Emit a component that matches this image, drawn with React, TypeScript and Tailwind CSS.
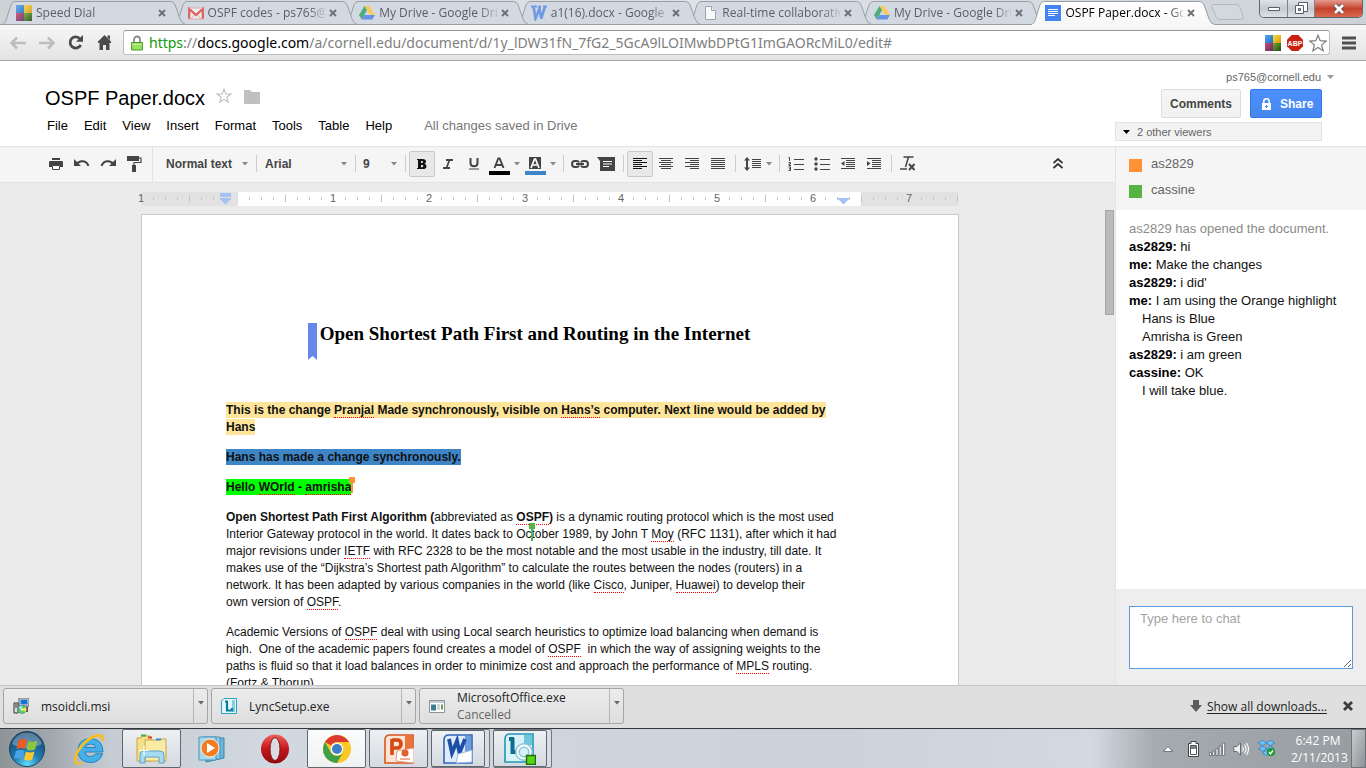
import React from "react";

const ui = "font-['Open_Sans',sans-serif]";

/* ---------- small drawings ---------- */

const DriveIcon = () => (
  <svg width="16" height="16" viewBox="0 0 16 16">
    <path d="M5.5 1h5L16 10h-5z" fill="#fbcb43" />
    <path d="M5.5 1 0 10l2.7 4.6L8 5.3z" fill="#3ba56a" />
    <path d="M5.2 10H16l-2.7 4.6H2.7z" fill="#5387ea" />
  </svg>
);
const DialIcon = () => (
  <svg width="16" height="16" viewBox="0 0 16 16">
    <defs>
      <linearGradient id="dialA" x2="1" y2="1"><stop stopColor="#5aa7ee" /><stop offset="1" stopColor="#1f6fc4" /></linearGradient>
      <linearGradient id="dialB" x2="1" y2="1"><stop stopColor="#ffd83c" /><stop offset="1" stopColor="#d79b10" /></linearGradient>
      <linearGradient id="dialC" x2="1" y2="1"><stop stopColor="#d2496b" /><stop offset="1" stopColor="#5c2c6c" /></linearGradient>
      <linearGradient id="dialD" x2="1" y2="1"><stop stopColor="#6fa92e" /><stop offset="1" stopColor="#234a12" /></linearGradient>
    </defs>
    <path d="M0 0h8v8H0z" fill="url(#dialA)" />
    <path d="M8 0h8v8H8z" fill="url(#dialB)" />
    <path d="M0 8h8v8H0z" fill="url(#dialC)" />
    <path d="M8 8h8v8H8z" fill="url(#dialD)" />
  </svg>
);
const MailIcon = () => (
  <svg width="16" height="16" viewBox="0 0 16 16">
    <path d="M0 3h16v11H0z" fill="#f4f0f0" />
    <path d="M3 14l4-5M13 14 9 9" stroke="#d9a9a7" fill="none" />
    <path d="M1.200 14V4L8 10l6.800-6v10" stroke="#dc4b45" strokeWidth="2.200" fill="none" />
    <path d="M1 3h14M0 14h16" stroke="#e8a19e" strokeWidth="1" />
  </svg>
);
const WIcon = () => (
  <svg width="16" height="16" viewBox="0 0 16 16" fill="none" stroke="#5f8fe6" strokeWidth="2.600">
    <path d="M2.500 1.500l2 12L8.500 3.500l1.700 10L14 1.500" />
    <path d="M0 1.500h6M7 2h3M12 1.500h4" strokeWidth="2" />
  </svg>
);
const PageIcon = () => (
  <svg width="16" height="16" viewBox="0 0 16 16">
    <path d="M3.500 1.500h6l4 4v9h-10z" fill="#fff" stroke="#9a9a9a" />
    <path d="M9.500 1.500v4h4" fill="#eee" stroke="#9a9a9a" />
  </svg>
);
const DocsIcon = () => (
  <svg width="16" height="16" viewBox="0 0 16 16">
    <path d="M0 0h16v16H0z" fill="#4384f4" />
    <path d="M3 4.500h10M3 6.500h10M3 8.500h10M3 10.500h7" stroke="#fff" strokeWidth="1" />
  </svg>
);
const CloseX = () => (
  <svg width="8" height="8" viewBox="0 0 8 8">
    <path d="M1 1l6 6M7 1 1 7" stroke="#6b6e72" strokeWidth="1.800" />
  </svg>
);
const Caret = ({ color = "#888" }: { color?: string }) => (
  <svg width="6" height="4" viewBox="0 0 6 4"><path d="M0 0h6L3 3.500z" fill={color} /></svg>
);

/* ---------- browser chrome ---------- */

const tabs = [
  { t: "Speed Dial", icon: <DialIcon /> },
  { t: "OSPF codes - ps765@", icon: <MailIcon /> },
  { t: "My Drive - Google Dri", icon: <DriveIcon /> },
  { t: "a1(16).docx - Google D", icon: <WIcon /> },
  { t: "Real-time collaborativ", icon: <PageIcon /> },
  { t: "My Drive - Google Dri", icon: <DriveIcon /> },
  { t: "OSPF Paper.docx - Go", icon: <DocsIcon />, active: true },
];

function TabStrip() {
  return (
    <div className={`flex h-[25px] shrink-0 items-stretch border-b border-[#9b9fa4] bg-linear-to-r from-[#cdd2d6] via-[#dfe3e7] to-[#ccd2d8] pl-0.5 ${ui}`}>
      <div role="tablist" className="-mb-px flex max-w-[1201px] min-w-0 flex-1">
        {tabs.map((tab, i) => (
          <div
            key={i}
            role="tab"
            aria-selected={!!tab.active}
            style={{ zIndex: tab.active ? 20 : 10 - i }}
            className="relative flex min-w-0 flex-1 items-center pr-2 pl-3.5"
          >
            <svg className="absolute top-0 left-0 h-full w-[calc(100%+12px)]" viewBox="0 0 184 25" preserveAspectRatio="none">
              <defs>
                <linearGradient id="tabOn" x2="0" y2="1"><stop stopColor="#fff" /><stop offset="1" stopColor="#f7f7f7" /></linearGradient>
              </defs>
              <path
                d="M0 24.500C3 24 3.500 22 4.500 19L9 5Q10.500 1.500 13 1.500H169Q172 1.500 173.500 5L178.500 19Q180.500 24 184 24.500"
                fill={tab.active ? "url(#tabOn)" : "#d3d9e2"}
                stroke="#9a9fa5"
              />
              <path d={tab.active ? "M1 24.500H183" : "M0 24.500H184"} stroke={tab.active ? "#f7f7f7" : "#9a9fa5"} />
            </svg>
            <span className={`relative shrink-0 ${tab.active ? "" : "opacity-85"}`}>{tab.icon}</span>
            <span className={`relative mr-1 ml-1 min-w-0 flex-1 text-[12px] leading-4 whitespace-nowrap [mask-image:linear-gradient(to_right,black_85%,rgba(0,0,0,0.2))] ${tab.active ? "text-black" : "text-[#5b5f66]"}`}>
              {tab.t}
            </span>
            <button aria-label="Close tab" className="relative flex size-2 items-center justify-center"><CloseX /></button>
          </div>
        ))}
      </div>
      <button aria-label="New tab" className="ml-2 h-4 w-[34px] self-center">
        <svg width="34" height="16" viewBox="0 0 34 16"><path d="M3 .5h22q3 0 4 3l3 9q.5 3-2 3H9q-3 0-4-3l-4-9q-1-3 2-3z" fill="#d2d8de" stroke="#b4b9be" /></svg>
      </button>
      <div className="mr-[3px] ml-auto flex h-[18px] overflow-hidden rounded-b-[5px] border border-t-0 border-[#5d6670] text-white">
        <button aria-label="Minimize" className="flex w-7 items-center justify-center border-r border-[#7b8590] bg-linear-to-b from-[#dfe3e7] via-[#c4cad0] to-[#dce1e6]">
          <svg width="12" height="6" viewBox="0 0 12 6"><path d="M.5 1.500h11v3H.5z" fill="#fff" stroke="#555e69" /></svg>
        </button>
        <button aria-label="Restore" className="flex w-[27px] items-center justify-center border-r border-[#7b8590] bg-linear-to-b from-[#dfe3e7] via-[#c4cad0] to-[#dce1e6]">
          <svg width="13" height="13" viewBox="0 0 13 13"><path d="M3.500 .5h9v9h-9z" fill="#fff" stroke="#555e69" /><path d="M.5 3.500h8v8h-8z" fill="#fff" stroke="#555e69" /><path d="M3.500 6.500h2v2h-2z" fill="#bbb" stroke="#555e69" /></svg>
        </button>
        <button aria-label="Close window" className="flex w-[47px] items-center justify-center bg-linear-to-b from-[#e39a8d] via-[#c5412c] to-[#d8694c]">
          <svg width="14" height="12" viewBox="0 0 14 12"><path d="M3 2l8 8M11 2l-8 8" stroke="#5c4040" strokeWidth="4.500" /><path d="M3 2l8 8M11 2l-8 8" stroke="#fff" strokeWidth="2.800" /></svg>
        </button>
      </div>
    </div>
  );
}

function AddressBar() {
  return (
    <div className="flex h-9 shrink-0 items-center border-b border-[#a3a3a3] bg-linear-to-b from-[#f7f7f7] to-[#e3e3e3] pr-2.5 pl-2">
      <button aria-label="Back" className="flex w-[29px] items-center pl-px">
        <svg width="18" height="14" viewBox="0 0 18 14" fill="none" stroke="#bdbdbd" strokeWidth="2.600"><path d="M8 1.500 2.500 7 8 12.500M3 7h14" /></svg>
      </button>
      <button aria-label="Forward" className="flex w-[29px] items-center pl-px">
        <svg width="18" height="14" viewBox="0 0 18 14" fill="none" stroke="#bdbdbd" strokeWidth="2.600"><path d="M10 1.500 15.500 7 10 12.500M15 7H1" /></svg>
      </button>
      <button aria-label="Reload" className="flex w-[29px] items-center pl-px">
        <svg width="17" height="17" viewBox="0 0 17 17"><path d="M13 4.800A5.600 5.600 0 1 0 13.700 11" fill="none" stroke="#4b4b4b" strokeWidth="2.800" /><path d="M16 1v6.800H9z" fill="#4b4b4b" /></svg>
      </button>
      <button aria-label="Home" className="flex w-7 items-center pl-px">
        <svg width="17" height="17" viewBox="0 0 17 17"><path d="M8.500 1 15.500 8l-1.300 1.300-.7-.6V16h-3.500v-5H7v5H3.500V8.700l-.7.6L1.500 8z" fill="#4b4b4b" /><path d="M11.500 1.500H14V6l-2.500-2.500z" fill="#4b4b4b" /></svg>
      </button>
      <div className="flex h-[25px] min-w-0 flex-1 items-center rounded-[3px] border border-[#bdbdbd] border-t-[#959595] bg-white pr-0.5 pl-[7px]">
        <svg width="12" height="16" viewBox="0 0 12 16" className="shrink-0"><path d="M3 8V4.500a3 3 0 0 1 6 0V8" fill="none" stroke="#8b8b8b" strokeWidth="1.800" /><path d="M.6 7.500h10.800v7.500H.6z" fill="#9be05f" stroke="#4d9a2c" /><path d="M1.500 9.500h9" stroke="#c3f09a" /></svg>
        <div className="ml-1.5 min-w-0 flex-1 truncate font-['Noto_Sans',sans-serif] text-[14px] leading-[22px] text-[#808080]">
          <span className="text-[#0b9a0b]">https</span>://<span className="text-black">docs.google.com</span>/a/cornell.edu/document/d/1y_lDW31fN_7fG2_5GcA9lLOIMwbDPtG1ImGAORcMiL0/edit#
        </div>
        <button aria-label="Speed dial" className="mr-1.5"><DialIcon /></button>
        <button aria-label="Adblock" className="mr-1.5">
          <svg width="16" height="16" viewBox="0 0 16 16"><path d="M4.700 0h6.600L16 4.700v6.600L11.300 16H4.700L0 11.300V4.700z" fill="#c9200f" /><text x="8" y="10.800" fontSize="7" fontWeight="bold" fontFamily="Liberation Sans" fill="#fff" textAnchor="middle">ABP</text></svg>
        </button>
        <button aria-label="Bookmark">
          <svg width="18" height="18" viewBox="0 0 18 18"><path d="M9 1.200l2.200 5.500 6 .4-4.600 3.800 1.500 5.800L9 13.500l-5.100 3.200 1.500-5.800L.8 7.100l6-.4z" fill="#fff" stroke="#7c7c7c" strokeWidth="1.200" /></svg>
        </button>
      </div>
      <button aria-label="Menu" className="ml-3">
        <svg width="14" height="14" viewBox="0 0 14 14"><path d="M0 2h14M0 7h14M0 12h14" stroke="#505050" strokeWidth="2.800" strokeLinecap="butt" /></svg>
      </button>
    </div>
  );
}

/* ---------- document header ---------- */

const menus = ["File", "Edit", "View", "Insert", "Format", "Tools", "Table", "Help"];

function Header() {
  return (
    <header className="flex h-[85px] shrink-0 justify-between bg-white">
      <div className="pt-[25px] pl-[45px]">
        <div className="flex h-6 items-center">
          <h1 className="text-[20px] leading-6 whitespace-nowrap text-black">OSPF Paper.docx</h1>
          <button aria-label="Star" className="mb-1 ml-[11px]">
            <svg width="16" height="16" viewBox="0 0 15 15"><path d="M7.500 1l1.700 4.500 4.800.2-3.800 3 1.300 4.600-4-2.600-4 2.600 1.300-4.600L1 5.700l4.800-.2z" fill="none" stroke="#c3c3c3" strokeWidth="1.100" /></svg>
          </button>
          <button aria-label="Move to folder" className="mb-0.5 ml-3">
            <svg width="16" height="14" viewBox="0 0 16 14"><path d="M0 0h6l2 2h8v12H0z" fill="#c0c0c0" /></svg>
          </button>
        </div>
        <nav className="mt-2 flex items-center pl-0.5 text-[13px] leading-4 text-black">
          {menus.map((m) => (
            <button key={m} className="mr-4">{m}</button>
          ))}
          <span className="ml-4 text-[#777]">All changes saved in Drive</span>
        </nav>
      </div>
      <div className="flex flex-col items-end pt-2 pr-11">
        <button className="-mr-3 flex items-center gap-1.5 text-[11px] leading-4 text-[#666]">
          ps765@cornell.edu <svg width="7" height="4" viewBox="0 0 7 4"><path d="M0 0h7L3.500 4z" fill="#999" /></svg>
        </button>
        <div className="mt-1 flex gap-[9px] text-[12px] leading-4 font-bold">
          <button className="h-[29px] w-20 rounded-xs border border-[#dcdcdc] bg-linear-to-b from-[#f6f6f6] to-[#f1f1f1] text-[#444]">Comments</button>
          <button className="flex h-[29px] w-[72px] items-center rounded-xs border border-[#3079ed] bg-linear-to-b from-[#4d90fe] to-[#4787ed] pl-2.5 text-white">
            <svg width="11" height="12" viewBox="0 0 11 12"><path d="M2.800 5V3.500a2.700 2.700 0 0 1 5.400 0V5" fill="none" stroke="#fff" strokeWidth="1.500" /><path d="M1 5h9v7H1z" fill="#fff" /><path d="M5.500 7v3M4 8.500h3" stroke="#4d90fe" strokeWidth="1.200" /></svg>
            <span className="ml-2">Share</span>
          </button>
        </div>
        <button className="mt-1 flex h-[19px] w-[207px] items-center gap-[7px] border border-[#e2e2e2] bg-[#f3f3f3] pl-[7px] text-[11px] leading-4 text-[#666]">
          <svg width="7" height="4" viewBox="0 0 7 4"><path d="M0 0h7L3.500 4z" fill="#000" /></svg>
          2 other viewers
        </button>
      </div>
    </header>
  );
}

/* ---------- toolbar ---------- */

const Tool = ({ label, on, wide, children }: { label: string; on?: boolean; wide?: boolean; children: React.ReactNode }) => (
  <button
    aria-label={label}
    aria-pressed={on}
    className={`flex h-[26px] shrink-0 items-center rounded-xs ${wide ? "w-9 justify-between pr-[3px] pl-0.5" : "w-[26px] justify-center"} ${on ? "border border-[#c9c9c9] bg-[#e8e8e8]" : ""}`}
  >
    {children}
    {wide && <Caret />}
  </button>
);
const Sep = () => <span className="mr-[3px] ml-1 h-[17px] w-px shrink-0 bg-[#ccc]" />;

const Lines = ({ d, color = "#444" }: { d: string; color?: string }) => (
  <svg width="16" height="14" viewBox="0 0 16 14"><path d={d} stroke={color} fill="none" /></svg>
);

const Picker = ({ label, value, className }: { label: string; value: string; className: string }) => (
  <div className={`relative flex h-full shrink-0 items-center ${className}`}>
    <select aria-label={label} defaultValue={value} className="w-full appearance-none bg-transparent text-[12px] leading-4 font-bold text-[#444] outline-none">
      <option>{value}</option>
    </select>
    <span className="pointer-events-none absolute inset-y-0 right-2 flex items-center"><Caret /></span>
  </div>
);

function Toolbar() {
  return (
    <div className="flex h-[37px] shrink-0 border-y border-[#e3e3e3] bg-[#f5f5f5]">
      <div className="mb-0.5 flex flex-1 items-center pl-[43px]">
        <Tool label="Print"><svg width="14" height="12" viewBox="0 0 14 12"><path d="M3 0h8v2H3zM1 3h12q1 0 1 1v5h-3V7H3v2H0V4q0-1 1-1z" fill="#444" /><path d="M3.500 7.500h7v4h-7z" fill="#fff" stroke="#444" /></svg></Tool>
        <Tool label="Undo"><svg width="16" height="9" viewBox="0 0 16 9"><path d="M0 0v7h7L4.600 4.700C8 2.300 12 3 13.500 7.200L15.500 6.500C13.500 .8 7.500-.3 3 3z" fill="#444" /></svg></Tool>
        <Tool label="Redo"><svg width="16" height="9" viewBox="0 0 16 9"><path d="M16 0v7H9l2.400-2.300C8 2.300 4 3 2.500 7.200L.5 6.500C2.500 .8 8.500-.3 13 3z" fill="#444" /></svg></Tool>
        <Tool label="Paint format"><svg width="15" height="16" viewBox="0 0 15 16"><path d="M0 0h12v5H0zM5 9h4v7H5z" fill="#444" /><path d="M12 2h2v4.500H7V10" fill="none" stroke="#444" strokeWidth="1.200" /></svg></Tool>
        <span className="-mb-0.5 ml-[5px] w-px self-stretch bg-[#e3e3e3]" />
        <Picker label="Style" value="Normal text" className="w-[103px] pl-[13px]" />
        <span className="h-[17px] w-px bg-[#ccc]" />
        <Picker label="Font" value="Arial" className="w-[98px] pl-2" />
        <span className="h-[17px] w-px bg-[#ccc]" />
        <Picker label="Font size" value="9" className="w-[49px] pl-[7px]" />
        <span className="mr-[3px] h-[17px] w-px bg-[#ccc]" />
        <Tool label="Bold" on><svg width="10" height="10" viewBox="0 0 10 10"><path d="M0 0h5.500Q9 0 9 2.600 9 4.200 7.600 4.700 9.500 5.200 9.500 7.200 9.500 10 6 10H0V9h1V1H0zM4 2v2h1q1 0 1-1T5 2zM4 6v2.200h1.200q1.100 0 1.100-1.100T5.200 6z" fill="#111" fillRule="evenodd" /></svg></Tool>
        <Tool label="Italic"><svg width="10" height="10" viewBox="0 0 10 10"><path d="M3 1h7M0 9h7M6.500 1 3.500 9" stroke="#444" strokeWidth="1.800" /></svg></Tool>
        <Tool label="Underline"><svg width="10" height="12" viewBox="0 0 10 12"><path d="M1.500 0v5q0 3.200 3.500 3.200T8.500 5V0" fill="none" stroke="#444" strokeWidth="2" /><path d="M0 11h10" stroke="#444" /></svg></Tool>
        <Tool label="Text color" wide><svg width="21" height="22" viewBox="0 0 21 22"><path d="M5.500 15 9.300 5.500h1.400L14.500 15M7 12h6" stroke="#444" strokeWidth="1.900" fill="none" /><path d="M0 18h21v4H0z" fill="#000" /></svg></Tool>
        <Tool label="Highlight color" wide><svg width="21" height="22" viewBox="0 0 21 22"><path d="M4 4h12v12H4z" fill="#444" /><path d="M6 15 9.500 6h1L14 15M8 12h4" stroke="#fff" strokeWidth="1.700" fill="none" /><path d="M0 18h21v4H0z" fill="#3d85c6" /></svg></Tool>
        <Sep />
        <Tool label="Insert link"><svg width="18" height="8" viewBox="0 0 18 8" fill="none" stroke="#444" strokeWidth="2"><path d="M8 2.500Q7.500 1 5.500 1H4Q1 1 1 4t3 3h1.500Q7.500 7 8 5.500M10 2.500Q10.500 1 12.500 1H14q3 0 3 3t-3 3h-1.500Q10.500 7 10 5.500M5 4h8" /></svg></Tool>
        <Tool label="Insert comment"><svg width="18" height="14" viewBox="0 0 18 14"><path d="M0 0h18v14H3V4z" fill="#444" /><path d="M6 4.500h9M6 7h9M6 9.500h6" stroke="#fff" strokeWidth="1.200" /></svg></Tool>
        <Sep />
        <Tool label="Align left" on><Lines color="#111" d="M1 1.500h14M1 3.500h9M1 5.500h14M1 7.500h9M1 9.500h14M1 11.500h9" /></Tool>
        <Tool label="Align center"><Lines d="M1 1.500h14M3 3.500h10M1 5.500h14M3 7.500h10M1 9.500h14M3 11.500h10" /></Tool>
        <Tool label="Align right"><Lines d="M1 1.500h14M6 3.500h9M1 5.500h14M6 7.500h9M1 9.500h14M6 11.500h9" /></Tool>
        <Tool label="Justify"><Lines d="M1 1.500h14M1 3.500h14M1 5.500h14M1 7.500h14M1 9.500h14M1 11.500h14" /></Tool>
        <Sep />
        <Tool label="Line spacing" wide><svg className="ml-[3px]" width="17" height="14" viewBox="0 0 17 14"><path d="M3 0l3 3.500H4v7h2L3 14l-3-3.500h2v-7H0z" fill="#444" /><path d="M8 2.500h9M8 4.500h9M8 6.500h9M8 8.500h9M8 10.500h9" stroke="#444" /></svg></Tool>
        <Sep />
        <Tool label="Numbered list"><svg width="16" height="14" viewBox="0 0 16 14"><path d="M6 2.500h10M6 7.500h10M6 12.500h10" stroke="#444" /><path d="M.5 .5h1v3.500M.5 5.500h2v1.500H1v1.500h2M.5 10h2v3.500h-2M1 11.700h1.500" fill="none" stroke="#444" /></svg></Tool>
        <Tool label="Bulleted list"><svg width="16" height="14" viewBox="0 0 16 14"><path d="M6 2.500h10M6 7.500h10M6 12.500h10" stroke="#444" /><circle cx="2" cy="2" r="1.700" fill="#444" /><circle cx="2" cy="7" r="1.700" fill="#444" /><circle cx="2" cy="12" r="1.700" fill="#444" /></svg></Tool>
        <Tool label="Decrease indent"><svg width="14" height="12" viewBox="0 0 14 12"><path d="M0 .5h14M5 2.500h9M5 4.500h9M5 6.500h9M5 8.500h9M0 10.500h14" stroke="#444" /><path d="M3.500 3v5L0 5.500z" fill="#444" /></svg></Tool>
        <Tool label="Increase indent"><svg width="14" height="12" viewBox="0 0 14 12"><path d="M0 .5h14M5 2.500h9M5 4.500h9M5 6.500h9M5 8.500h9M0 10.500h14" stroke="#444" /><path d="M0 3v5l3.500-2.500z" fill="#444" /></svg></Tool>
        <Sep />
        <Tool label="Clear formatting"><svg width="16" height="15" viewBox="0 0 16 15"><path d="M3.500 1h10M8.500 1 5.500 11M0 13h7" stroke="#444" strokeWidth="1.500" /><path d="M9 8l5.500 6M14.500 8 9 14" stroke="#444" strokeWidth="1.900" /></svg></Tool>
        <div className="mr-11 ml-auto">
          <Tool label="Hide menus"><svg width="10" height="11" viewBox="0 0 10 11"><path d="M.5 5 5 1l4.500 4M.5 10 5 6l4.500 4" fill="none" stroke="#333" strokeWidth="1.700" /></svg></Tool>
        </div>
      </div>
    </div>
  );
}

/* ---------- ruler and page ---------- */

function Ruler() {
  const ticks = [];
  for (let k = 1; k <= 68; k++) {
    const x = k * 12;
    if (k % 8 === 0 && k !== 8) {
      ticks.push(<text key={k} x={x} y="10" textAnchor="middle" fontSize="11" fill="#666">{Math.abs(k / 8 - 1)}</text>);
    } else if (k % 4 === 0 && k !== 8) {
      ticks.push(<path key={k} d={`M${x + 0.5} 3v7`} stroke="#c4c4c4" />);
    } else if (k !== 7 && k !== 8) {
      ticks.push(<path key={k} d={`M${x + 0.5} 5v3`} stroke="#c4c4c4" />);
    }
  }
  return (
    <svg className="mt-[9px] ml-[141px] shrink-0 overflow-visible font-['Liberation_Sans',sans-serif]" width="818" height="14" viewBox="0 0 818 14">
      <path d="M0 0h817v14H0z" fill="#e2e2e2" />
      <path d="M97 0h623v14H97z" fill="#fff" />
      <text x="0" y="10" textAnchor="middle" fontSize="11" fill="#666">1</text>
      {ticks}
      <path d="M79 1h11v4H79zM79 6h11v1l-5.500 5.500L79 7z" fill="#a4c2f4" />
      <path d="M697 6h11v1l-5.500 5.500L697 7z" fill="#a4c2f4" />
    </svg>
  );
}

const Sp = ({ children }: { children: React.ReactNode }) => (
  <span className="border-b border-dotted border-[#f00]">{children}</span>
);

function Page() {
  return (
    <article className="ml-[141px] w-[818px] border border-[#c9c9c9] bg-white pr-[114px] pl-[84px] text-[12px] leading-[17px] whitespace-nowrap text-[#111]">
      <h2 className="mt-[107px] flex justify-center font-['Liberation_Serif',serif] text-[19px] leading-6 font-bold text-black">
        <span className="relative">
          <svg className="absolute top-px -left-3" width="9" height="37" viewBox="0 0 9 37"><path d="M0 0h9v37l-4.500-4L0 37z" fill="#6788ea" /></svg>
          Open Shortest Path First and Routing in the Internet
        </span>
      </h2>
      <p className="mt-14 font-bold">
        <span className="bg-[#ffe599] py-px">This is the change <Sp>Pranjal</Sp> Made synchronously, visible on <Sp>Hans’s</Sp> computer. Next line would be added by<br />Hans</span>
      </p>
      <p className="mt-[13px] font-bold"><span className="bg-[#3d85c6] py-px">Hans has made a change synchronously.</span></p>
      <p className="mt-[13px] font-bold">
        <span className="relative bg-[#0f0] py-px">
          Hello <Sp>WOrld</Sp> - <Sp>amrisha</Sp>
          <span className="absolute -top-0.5 -right-1 size-1.5 bg-[#ff9139]" />
          <span className="absolute top-0 -right-0.5 h-3.5 w-0.5 bg-[#ff9139]" />
        </span>
      </p>
      <p className="mt-[13px]">
        <b>Open Shortest Path First Algorithm (</b>abbreviated as <b><Sp>OSPF</Sp>)</b> is a dynamic routing protocol which is the most used<br />
        Interior Gateway protocol in the world. It dates back to Oc
        <span className="relative">
          <span className="absolute -top-1 -left-0.5 size-1.5 bg-[#56b442]" />
          <span className="absolute top-0 left-0 h-3.5 w-0.5 bg-[#56b442]" />
        </span>
        tober 1989, by John T <Sp>Moy</Sp> (RFC 1131), after which it had<br />
        major revisions under <Sp>IETF</Sp> with RFC 2328 to be the most notable and the most usable in the industry, till date. It<br />
        makes use of the “Dijkstra’s Shortest path Algorithm” to calculate the routes between the nodes (routers) in a<br />
        network. It has been adapted by various companies in the world (like <Sp>Cisco</Sp>, Juniper, <Sp>Huawei</Sp>) to develop their<br />
        own version of <Sp>OSPF</Sp>.
      </p>
      <p className="mt-[13px]">
        Academic Versions of <Sp>OSPF</Sp> deal with using Local search heuristics to optimize load balancing when demand is<br />
        high. &nbsp;One of the academic papers found creates a model of <Sp>OSPF</Sp> &nbsp;in which the way of assigning weights to the<br />
        paths is fluid so that it load balances in order to minimize cost and approach the performance of <Sp>MPLS</Sp> routing.<br />
        (Fortz &amp; Thorup)
      </p>
    </article>
  );
}

/* ---------- chat ---------- */

const chat: [string, string][] = [
  ["as2829:", "hi"],
  ["me:", "Make the changes"],
  ["as2829:", "i did'"],
  ["me:", "I am using the Orange highlight"],
  ["", "Hans is Blue"],
  ["", "Amrisha is Green"],
  ["as2829:", "i am green"],
  ["cassine:", "OK"],
  ["", "I will take blue."],
];

function Chat() {
  return (
    <aside className="flex w-[251px] shrink-0 flex-col border-l border-[#e3e3e3] bg-white text-[13px]">
      <ul className="flex h-16 shrink-0 flex-col gap-2.5 border-t border-[#e3e3e3] bg-[#f5f5f5] pt-[9px] pl-[13px] leading-4 text-[#666]">
        <li className="flex items-end gap-[9px]"><span className="size-[13px] bg-[#ff9139]" />as2829</li>
        <li className="flex items-end gap-[9px]"><span className="size-[13px] bg-[#56b442]" />cassine</li>
      </ul>
      <div className="min-h-0 flex-1 overflow-hidden pt-2.5 pl-[13px] leading-[18px] text-[#111]">
        <p className="text-[#8a8a8a]">as2829 has opened the document.</p>
        {chat.map(([who, msg], i) => (
          <p key={i} className={who ? "" : "pl-[13px]"}>{who && <b className="text-black">{who}</b>} {msg}</p>
        ))}
      </div>
      <div className="h-24 shrink-0 bg-[#eee] px-[13px] pt-[17px]">
        <textarea aria-label="Chat message" placeholder="Type here to chat" className="block h-[63px] w-full border border-[#5b9be0] bg-white px-2.5 py-1 text-[13px] leading-4 placeholder:text-[#a3a3a3] focus:outline-none" />
      </div>
    </aside>
  );
}

/* ---------- downloads ---------- */

const downloads = [
  {
    name: "msoidcli.msi",
    icon: (
      <svg width="16" height="16" viewBox="0 0 16 16"><path d="M6 0h10v8H6z" fill="#e8e8e0" stroke="#555" /><path d="M7.500 1.500h7v5h-7z" fill="#1673d8" /><path d="M1 5h4v10H1z" fill="#ddd" stroke="#333" /><path d="M2 7h2M2 9h2" stroke="#333" /><path d="M11 9h4v5h-4z" fill="#555" /><circle cx="9" cy="11.500" r="4" fill="#5ad06f" stroke="#286" strokeWidth=".6" /><path d="M9 11.500 12.500 9a4 4 0 0 1 0 5z" fill="#f5e14a" /><path d="M9 11.500 5.500 10A4 4 0 0 1 9 7.600z" fill="#9fe3f5" /><circle cx="9" cy="11.500" r="1" fill="#fff" /></svg>
    ),
  },
  {
    name: "LyncSetup.exe",
    icon: (
      <svg width="16" height="16" viewBox="0 0 16 16"><path d="M3 .5h12.500v15H.5V3z" fill="#e6f7fb" stroke="#2aa3bd" /><path d="M11 2h3v12h-3z" fill="#7fd3e3" /><path d="M4 3.500h3M6 3v9.500h5V10" stroke="#0a7f9c" strokeWidth="2.200" fill="none" /></svg>
    ),
  },
  {
    name: "MicrosoftOffice.exe",
    note: "Cancelled",
    icon: (
      <svg width="16" height="13" viewBox="0 0 16 13"><path d="M.5 .5h15v12H.5z" fill="#fff" stroke="#8d9499" /><path d="M1 1h14v2H1z" fill="#c5ccd3" /><path d="M2 4.500h5v6H2z" fill="#3a7f8d" /><path d="M8 5h3M8 7h3M8 9h3" stroke="#aaa" /><path d="M12 4.500h2v5h-2z" fill="#5aa06a" /></svg>
    ),
  },
];

function Downloads() {
  return (
    <div className={`flex h-[43px] shrink-0 items-center border-t border-[#c6c6c6] bg-[#dfdfdf] pb-0.5 pl-[3px] text-[12px] leading-[17px] text-[#222] ${ui}`}>
      {downloads.map((d) => (
        <div key={d.name} className="mr-[3px] flex h-9 w-[205px] shrink-0 rounded-[3px] border border-[#a5a5a5] bg-linear-to-b from-[#ececec] to-[#dedede]">
          <button className="flex flex-1 items-center gap-3 pl-[9px] text-left">
            <span className="w-4">{d.icon}</span>
            <span className="flex flex-col whitespace-nowrap">{d.name}{d.note && <span className="text-[#666]">{d.note}</span>}</span>
          </button>
          <button aria-label="More" className="flex w-3.5 justify-center border-l border-[#b5b5b5] pt-3"><Caret color="#666" /></button>
        </div>
      ))}
      <svg className="ml-auto" width="12" height="12" viewBox="0 0 12 12"><path d="M3 0h6v5h3l-6 7-6-7h3z" fill="#5c5c5c" /></svg>
      <a href="#downloads" className="mr-4 ml-[5px] whitespace-nowrap text-[#222] underline underline-offset-2">Show all downloads...</a>
      <button aria-label="Close downloads" className="mr-[13px]"><svg width="10" height="10" viewBox="0 0 10 10"><path d="M1 1l8 8M9 1 1 9" stroke="#3d3d3d" strokeWidth="2.800" /></svg></button>
    </div>
  );
}

/* ---------- taskbar ---------- */

const TaskButton = ({ label, framed, stacked, active, children }: { label: string; framed?: boolean; stacked?: boolean; active?: boolean; children: React.ReactNode }) => (
  <div className={`flex h-full shrink-0 ${stacked ? "w-[59px] rounded-xs border border-l-0 border-[#70777e] bg-[#d8dee5]" : "w-[59px]"}`}>
    <button
      aria-label={label}
      className={`flex h-full flex-1 items-center justify-center ${framed ? "rounded-xs border border-[#60676e]" : ""} ${active ? "bg-linear-to-b from-[#fbfcfc] to-[#eff1f3]" : framed ? "bg-linear-to-b from-[#eef1f3] to-[#d5dae0]" : ""}`}
    >
      {children}
    </button>
    {stacked && <span className="w-1" />}
  </div>
);

function Taskbar() {
  return (
    <div className={`flex h-10 shrink-0 items-center border-t border-[#33373b] bg-[linear-gradient(to_right,#8d9498_0%,#a3aaaf_4%,#c6ccd4_8%,#d2d8e0_20%,#ccd2d9_60%,#d3d9e1_80%,#a5abaf_84.500%,#969c9f_100%)] ${ui}`}>
      <button aria-label="Start" className="mr-1 ml-2 shrink-0">
        <svg width="38" height="38" viewBox="0 0 38 38">
          <defs>
            <radialGradient id="orb" cx=".5" cy=".95" r=".95"><stop stopColor="#5fe0fb" /><stop offset=".4" stopColor="#1f7db5" /><stop offset="1" stopColor="#123f66" /></radialGradient>
          </defs>
          <circle cx="19" cy="19" r="17.500" fill="url(#orb)" stroke="#20435f" />
          <path d="M4 14a15.500 15.500 0 0 1 30 0Q19 22 4 14z" fill="#fff" opacity=".3" />
          <path d="M10.500 10.500q4.500-2.500 8.500-.5l-2 9q-4-2-8.500 0z" fill="#ee5a24" />
          <path d="M20.500 11q4 2 9-.5l-2.500 9q-4.500 2-8.500 0z" fill="#8cc63e" />
          <path d="M8 21q4.500-2 8.500 0l-2 8q-4-2-8.500 0z" fill="#4aa3e8" />
          <path d="M18 21.500q4 2 8.500 0l-2.300 8q-4.200 2-8.200 0z" fill="#fdc82f" />
        </svg>
      </button>
      <div className="mr-1 flex w-[68px] shrink-0 justify-center pl-3">
        <button aria-label="Internet Explorer">
          <svg width="34" height="34" viewBox="0 0 34 34">
            <path d="M30 20H12q.8 4.500 5.500 4.500 3.500 0 5-2.700h7Q27 30.500 17.500 30.500 5 30 5 18.500T17.500 6.500Q30 7 30 20zM12 15.500h11Q22 12 17.500 12T12 15.500z" fill="#45b0e8" stroke="#2384c2" />
            <path d="M3.500 31.500C-1 26 8 11 19 5.500 26 2 31 2.500 29.500 9" fill="none" stroke="#f7be1e" strokeWidth="2.600" />
            <path d="M3.500 31.500q2.500 1 6-1" fill="none" stroke="#f7be1e" strokeWidth="2" />
          </svg>
        </button>
      </div>
      <TaskButton label="Windows Explorer" framed>
        <svg width="32" height="30" viewBox="0 0 32 30">
          <path d="M1 4h4l1-2h8l1 2v23H1z" fill="#f7e08b" stroke="#c9a645" />
          <path d="M9 6h14l1-1h6v22H9z" fill="#fbeaa4" stroke="#c9a645" />
          <path d="M5 1.500h5" stroke="#4aa94a" strokeWidth="2" />
          <path d="M12 3.500h4" stroke="#d9443a" strokeWidth="2" /><path d="M20 5.500h5" stroke="#3a86d9" strokeWidth="2" />
          <path d="M4 29v-8q0-4 4-4h16q4 0 4 4v8h-5v-6H9v6z" fill="#a5dcf3" stroke="#5ba4c8" />
          <path d="M8 12v9M3.500 16.500h9" stroke="#fff" strokeWidth="1.200" />
        </svg>
      </TaskButton>
      <TaskButton label="Media Player">
        <svg className="ml-1" width="30" height="28" viewBox="0 0 30 28"><path d="M8 3h18v20l-18 4z" fill="#6fb4d8" stroke="#3d86ad" /><path d="M5 2h17v22H5z" fill="#8dc9e6" stroke="#4a93ba" /><path d="M1 2h17v23H1z" fill="#a5d8ef" stroke="#4a93ba" /><circle cx="12" cy="13" r="9" fill="#f47b20" stroke="#fff" strokeWidth=".8" /><path d="M9 8l8 5-8 5z" fill="#fff" /></svg>
      </TaskButton>
      <div className="-ml-px flex w-[67px] shrink-0 justify-center pl-1">
        <button aria-label="Opera">
          <svg width="30" height="30" viewBox="0 0 30 30"><defs><linearGradient id="op" x2="0" y2="1"><stop stopColor="#f0605a" /><stop offset=".5" stopColor="#c4161c" /><stop offset="1" stopColor="#8d0b10" /></linearGradient></defs><ellipse cx="15" cy="15" rx="14" ry="14.500" fill="url(#op)" /><ellipse cx="15" cy="15" rx="5" ry="11.500" fill="#d8dce2" stroke="#8d0b10" /></svg>
        </button>
      </div>
      <div className="ml-px flex h-full items-center gap-[3px]">
        <TaskButton label="Chrome" framed active>
          <svg width="28" height="28" viewBox="0 0 28 28"><circle cx="14" cy="14" r="14" fill="#fcc826" /><path d="M1.900 7A14 14 0 0 1 26.100 7H14a7 7 0 0 0-6 3.500z" fill="#dc3b30" /><path d="M1.900 7A14 14 0 0 0 14 28l6-10.500a7 7 0 0 1-12.100 0z" fill="#3fa04b" /><circle cx="14" cy="14" r="6.300" fill="#fff" /><circle cx="14" cy="14" r="5" fill="#3f7fc9" /></svg>
        </TaskButton>
        <TaskButton label="PowerPoint" framed>
          <svg width="30" height="30" viewBox="0 0 30 30"><path d="M6 1h23v28H1V6q0-5 5-5z" fill="#fbe3d6" stroke="#d9541e" strokeWidth="1.600" /><path d="M21 2h7v26h-7z" fill="#e8743c" /><path d="M8 5v16M8 6h5q4 0 4 4t-4 4H8" fill="none" stroke="#d24a12" strokeWidth="3.600" /><path d="M13 17l17-3v15l-18-2z" fill="#fff" stroke="#e0a183" /><circle cx="21" cy="19" r="3.500" fill="#e4602a" /><path d="M16 25h10" stroke="#e4602a" /></svg>
        </TaskButton>
        <TaskButton label="Word" framed stacked>
          <svg width="30" height="30" viewBox="0 0 30 30"><path d="M6 1h23v28H1V6q0-5 5-5z" fill="#dfeafa" stroke="#3265b8" strokeWidth="1.600" /><path d="M22 2h6v26h-6z" fill="#6e9ce0" /><path d="M6 5l3 14 5-12 2.500 12L22 5" fill="none" stroke="#1d4fa5" strokeWidth="3.800" /><path d="M15 20l14-4v12l-16 1z" fill="#fff" stroke="#9ab6e0" /></svg>
        </TaskButton>
        <TaskButton label="Lync" framed stacked>
          <svg width="32" height="32" viewBox="0 0 32 32"><path d="M6 1h23v28H1V6q0-5 5-5z" fill="#d8f2f8" stroke="#2596b4" strokeWidth="1.600" /><path d="M20 2h8v10h-8z" fill="#6cc7da" /><path d="M5 6h5M8.500 5v14H15" fill="none" stroke="#0f6e8d" strokeWidth="4" /><circle cx="20" cy="19" r="6.500" fill="none" stroke="#8ac5da" strokeWidth="5" /><circle cx="20" cy="19" r="6.500" fill="none" stroke="#fff" strokeWidth="2" /><path d="M22.500 22.500h9v9h-9z" fill="#53d613" stroke="#246b0a" strokeWidth="1.400" /></svg>
        </TaskButton>
      </div>
      <div className="ml-auto flex h-full shrink-0 items-center text-white">
        <svg width="10" height="6" viewBox="0 0 10 6"><path d="M5 .5 9.500 5.500h-9z" fill="#fff" stroke="#5b6166" strokeWidth=".8" /></svg>
        <svg className="ml-[15px]" width="11" height="16" viewBox="0 0 11 16"><path d="M3 .5h5v2h2.500v13H.5v-13H3z" fill="#fff" stroke="#3f4448" /><path d="M2.500 4.500h6v9h-6z" fill="#fff" stroke="#555" /><path d="M3 5h5v3H3z" fill="#7b8085" /></svg>
        <svg className="ml-2.5" width="17" height="14" viewBox="0 0 17 14" fill="#fff" stroke="#50565b" strokeWidth=".7"><path d="M.5 10.500h2v3h-2zM3.700 9h2v4.500h-2zM7 6.500h2v7H7zM10.200 4h2v9.500h-2zM13.500 1h2.200v12.500h-2.200z" /></svg>
        <svg className="ml-[7px]" width="16" height="14" viewBox="0 0 16 14"><path d="M.8 4.500h3L7.500 1v12L3.800 9.500h-3z" fill="#eee" stroke="#50565b" strokeWidth=".8" /><path d="M9.500 4.500q1.500 2.500 0 5M11.500 2.500q3 4.500 0 9M13.500 1q4 6 0 12" fill="none" stroke="#fff" strokeWidth="1.100" /></svg>
        <svg className="ml-[9px]" width="18" height="17" viewBox="0 0 18 17"><path d="M4.500 0 8.500 3l-4 2.700L.5 3zM12.500 0l4 3-4 2.700-4-2.700zM4.500 6l4 2.700-4 2.700-4-2.700zM12.500 6l4 2.700-4 2.700-4-2.700zM8.500 10l4 3-4 2.500-4-2.500z" fill="#6cc2f5" stroke="#1f7cc4" strokeWidth=".7" /><circle cx="13" cy="12" r="4.300" fill="#1f9a35" /><path d="M11 12l1.500 1.800L15 10.500" stroke="#fff" strokeWidth="1.400" fill="none" /></svg>
        <div className="ml-[15px] w-[54px] text-center text-[12px] leading-[17px] whitespace-nowrap">6:42 PM<br />2/11/2013</div>
        <button aria-label="Show desktop" className="ml-1.5 h-full w-[15px] border border-[#6f7579] bg-linear-to-br from-[#c9cdd0] to-[#8d9396]" />
      </div>
    </div>
  );
}

export default function App() {
  return (
    <div className="flex h-screen flex-col overflow-hidden bg-white font-['Liberation_Sans',Arial,sans-serif]">
      <TabStrip />
      <AddressBar />
      <Header />
      <main className="flex min-h-0 flex-1">
        <section className="flex min-w-0 flex-1 flex-col bg-[#ebebeb]">
          <Toolbar />
          <Ruler />
          <div className="flex min-h-0 flex-1 items-start gap-1 pt-1 pr-px">
            <div className="mt-1 min-h-0 flex-1 self-stretch overflow-hidden"><Page /></div>
            <div className="h-[105px] w-[9px] shrink-0 border border-[#a5a5a5] bg-[#bababa]" />
          </div>
        </section>
        <Chat />
      </main>
      <Downloads />
      <Taskbar />
    </div>
  );
}
